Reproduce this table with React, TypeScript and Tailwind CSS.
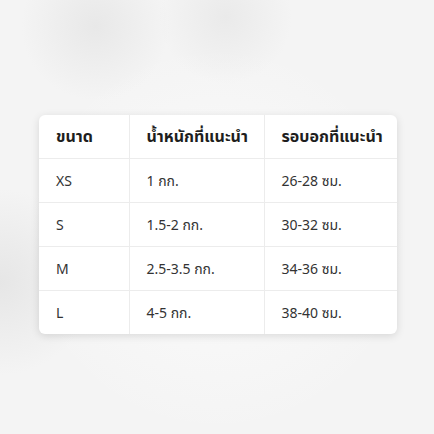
const rows = [
  { size: "XS", weight: "1 กก.", chest: "26-28 ซม." },
  { size: "S", weight: "1.5-2 กก.", chest: "30-32 ซม." },
  { size: "M", weight: "2.5-3.5 กก.", chest: "34-36 ซม." },
  { size: "L", weight: "4-5 กก.", chest: "38-40 ซม." },
];

export default function App() {
  return (
    <div
      className="h-[434px] w-[434px] overflow-hidden pt-[115px] pl-[39px] bg-[#f4f4f4] bg-[radial-gradient(circle_at_22%_6%,#e8e8e8_0,transparent_14%),radial-gradient(circle_at_52%_4%,#eaeaea_0,transparent_14%),radial-gradient(circle_at_0%_65%,#e6e6e6_0,transparent_18%),radial-gradient(circle_at_50%_55%,#fbfbfb_0,transparent_60%)]"
      style={{ fontFamily: '"Noto Sans", "Noto Sans Thai", Tahoma, sans-serif' }}
    >
      <div className="w-[358px] overflow-hidden rounded-md bg-white shadow-[0_2px_8px_rgba(0,0,0,0.12)]">
        <table className="w-full border-collapse text-[14px]">
          <thead>
            <tr className="h-[43px] border-b border-[#ececec] text-[16px] text-[#1e1e1e]">
              <th className="w-[90px] border-r border-[#ececec] pl-[17px] text-left font-bold">ขนาด</th>
              <th className="w-[135px] border-r border-[#ececec] pl-[17px] text-left font-bold">น้ำหนักที่แนะนำ</th>
              <th className="pl-[17px] text-left font-bold">รอบอกที่แนะนำ</th>
            </tr>
          </thead>
          <tbody>
            {rows.map((r, i) => (
              <tr
                key={r.size}
                className={`h-[44px] text-[#333] ${i < rows.length - 1 ? "border-b border-[#ececec]" : ""}`}
              >
                <td className="border-r border-[#ececec] pl-[17px]">{r.size}</td>
                <td className="border-r border-[#ececec] pl-[17px]">{r.weight}</td>
                <td className="pl-[17px]">{r.chest}</td>
              </tr>
            ))}
          </tbody>
        </table>
      </div>
    </div>
  );
}
